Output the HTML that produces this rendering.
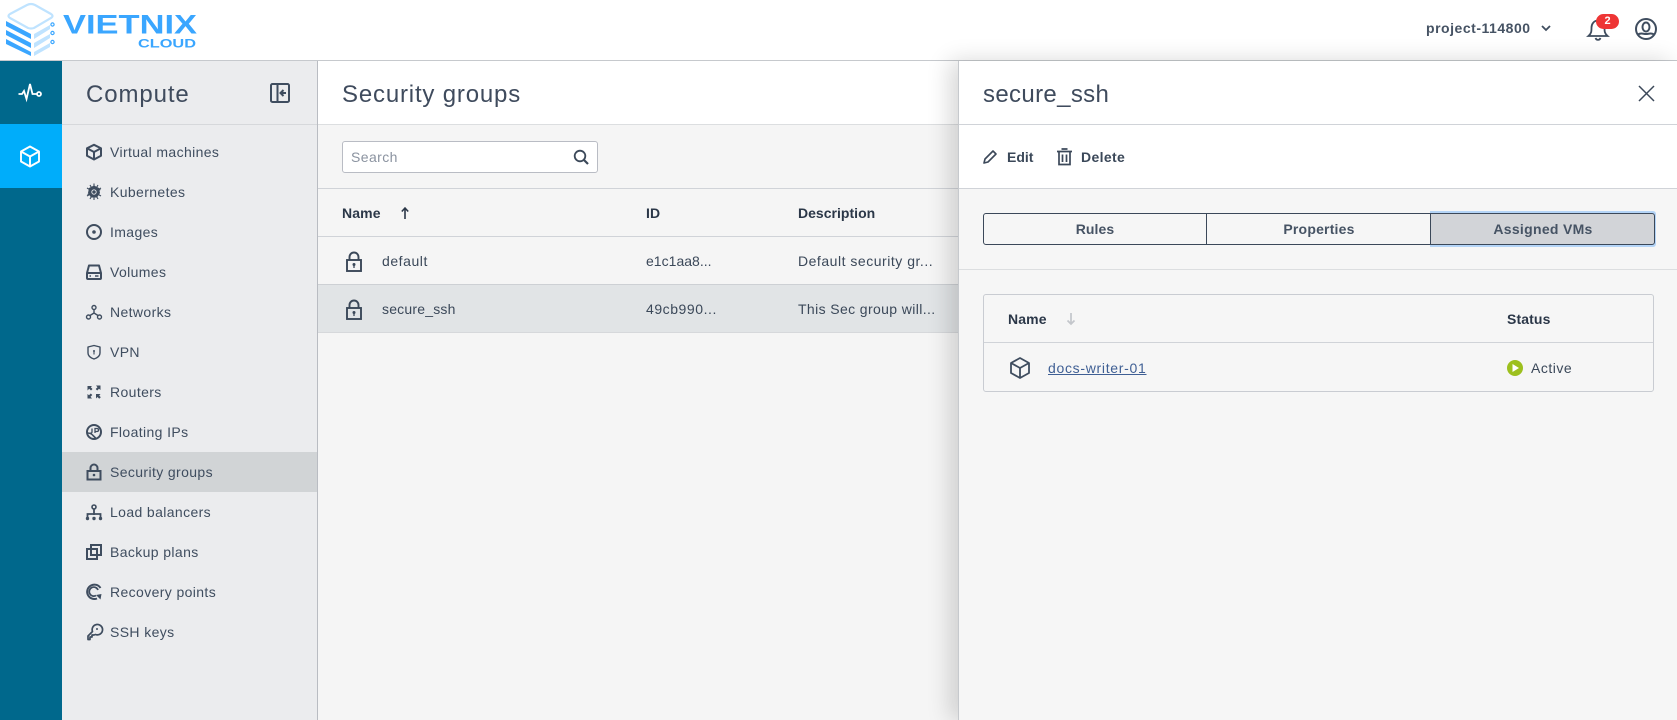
<!DOCTYPE html>
<html><head><meta charset="utf-8"><title>Security groups</title>
<style>
*{box-sizing:border-box}
html,body{margin:0;padding:0;width:1677px;height:720px;overflow:hidden;background:#f5f5f5;font-family:"Liberation Sans",sans-serif;color:#3b4859}
.a{position:absolute}
.t{position:absolute;white-space:nowrap;line-height:20px;font-size:14px}
.nav{position:absolute;left:62px;width:255px;height:40px}
.nav svg{position:absolute;left:22px;top:10px;width:20px;height:20px;fill:none;stroke:#3f4d5f;stroke-width:2}
.nav span{position:absolute;left:48px;top:10px;font-size:14px;line-height:20px;letter-spacing:.38px;color:#3f4d5f;white-space:nowrap}
.b{font-weight:bold;color:#2b3748;letter-spacing:.12px}
.l{background:#d0d3d8;height:1px;position:absolute}
</style></head><body>

<!-- header -->
<div class="a" style="left:0;top:0;width:1677px;height:61px;background:#fff;border-bottom:1px solid #c6c9cd"></div>
<svg class="a" style="left:4px;top:1px" width="200" height="56" viewBox="0 0 200 56">
<path d="M27 3 Q29 3 31 4 L47 13 Q50 15 47 17 L30 27 Q27 28 24 27 L6 17 Q3 15 6 13 L23 4 Q25 3 27 3Z" fill="#fff" stroke="#bfe3ff" stroke-width="2.200"/>
<path d="M2 20 27 33V38L2 25Z M2 29 27 42V47L2 34Z M2 38 27 51V55L2 43Z" fill="#3aa6ff"/>
<path d="M30 33 46 24V28L30 38Z M30 42 46 33V37L30 47Z M30 51 46 42V46L30 55Z" fill="#bfe3ff"/>
<circle cx="48.500" cy="23.500" r="1.600" fill="#fff" stroke="#3aa6ff" stroke-width="1.200"/><circle cx="48.500" cy="32" r="1.600" fill="#fff" stroke="#3aa6ff" stroke-width="1.200"/><circle cx="48.500" cy="41" r="1.600" fill="#fff" stroke="#3aa6ff" stroke-width="1.200"/>
<text x="59" y="32.500" font-family="Liberation Sans" font-weight="bold" font-size="27" fill="#3aa6ff" textLength="134" lengthAdjust="spacingAndGlyphs">VIETNIX</text>
<text x="134" y="46.500" font-family="Liberation Sans" font-weight="bold" font-size="11.500" fill="#3aa6ff" textLength="58" lengthAdjust="spacingAndGlyphs">CLOUD</text>
</svg>
<div class="t" style="left:1426px;top:18px;font-weight:bold;color:#465364;letter-spacing:.52px">project-114800</div>
<svg class="a" style="left:1540px;top:24px" width="12" height="8" viewBox="0 0 12 8" fill="none" stroke="#3f4d5f" stroke-width="1.800"><path d="M2 2 6 6 10 2"/></svg>
<svg class="a" style="left:1586px;top:17px" width="24" height="25" viewBox="0 0 24 25" fill="none" stroke="#3f4d5f" stroke-width="1.800"><path d="M2.500 19C5.500 16.500 5.500 14 5.500 10.500 5.500 7 8 3.500 12 3.500S18.500 7 18.500 10.500C18.500 14 18.500 16.500 21.500 19Z"/><path d="M9.500 21C10.500 23.500 13.500 23.500 14.500 21"/></svg>
<div class="a" style="left:1596px;top:14px;width:23px;height:15px;border-radius:8px;background:#ee3535;color:#fff;font-size:11px;font-weight:bold;line-height:15px;text-align:center">2</div>
<svg class="a" style="left:1634px;top:17px" width="24" height="24" viewBox="0 0 24 24" fill="none" stroke="#3f4d5f" stroke-width="2"><circle cx="12" cy="12" r="10"/><ellipse cx="12" cy="10" rx="3.500" ry="4.500"/><path d="M4 17.500C7 15.500 9 17 12 17S17 15.500 20 17.500"/></svg>

<!-- rail -->
<div class="a" style="left:0;top:61px;width:62px;height:659px;background:#00688c"></div>
<div class="a" style="left:0;top:124px;width:62px;height:64px;background:#00adfa"></div>
<svg class="a" style="left:17px;top:81px" width="26" height="22" viewBox="0 0 26 22" fill="none" stroke="#fff" stroke-width="1.800"><path d="M1.500 13H5L7 10 9.500 18 13 3 15.500 13H20"/><circle cx="22" cy="13" r="2"/></svg>
<svg class="a" style="left:19px;top:145px" width="22" height="23" viewBox="0 0 22 23" fill="none" stroke="#fff" stroke-width="1.900" stroke-linejoin="round"><path d="M11 1.500 20 6.500V16.500L11 21.500 2 16.500V6.500Z"/><path d="M2 6.500 11 11.500 20 6.500M11 11.500V21.500"/></svg>

<!-- sidebar -->
<div class="a" style="left:62px;top:61px;width:256px;height:659px;background:#ebecee;border-right:1px solid #b9bcc2"></div>
<div class="l" style="left:62px;top:124px;width:255px;background:#d6d8db"></div>
<div class="t" style="left:86px;top:80px;font-size:24px;line-height:30px;color:#3f4b5d;letter-spacing:.9px">Compute</div>
<svg class="a" style="left:269px;top:82px" width="22" height="22" viewBox="0 0 22 22" fill="none" stroke="#3f4d5f" stroke-width="2"><rect x="2" y="2" width="18" height="18" rx="1.500"/><path d="M8.500 2V20"/><path d="M17 11H12M14.500 8 11.500 11 14.500 14"/></svg>

<div class="a" style="left:62px;top:452px;width:255px;height:40px;background:#d1d4d6"></div>

<div class="nav" style="top:132px"><svg viewBox="0 0 20 20"><path d="M10 2.800 17 6.300V13.700L10 17.500 3 13.700V6.300Z" stroke-linejoin="round"/><path d="M3 6.300 10 10 17 6.300M10 10V17.500"/></svg><span>Virtual machines</span></div>
<div class="nav" style="top:172px"><svg viewBox="0 0 20 20"><path d="M10 3.500 15 6 16 11 13 15.500H7L4 11 5 6Z" fill="#3f4d5f" stroke="none"/><circle cx="10" cy="10" r="1.600" fill="#ebecee" stroke="none"/><path d="M10 1.500V18M3 6 17 14M17 6 3 14M3.500 12.500 16.500 7.500M6 17 14 3M14 17 6 3" stroke-width="1.100"/><circle cx="10" cy="10" r="2.200" fill="#3f4d5f" stroke="#ebecee" stroke-width=".9"/></svg><span>Kubernetes</span></div>
<div class="nav" style="top:212px"><svg viewBox="0 0 20 20"><circle cx="10" cy="10" r="7"/><circle cx="10" cy="10" r="1.800" fill="#3f4d5f" stroke="none"/></svg><span>Images</span></div>
<div class="nav" style="top:252px"><svg viewBox="0 0 20 20"><path d="M3 11 5 3.500H15L17 11V16Q17 17 16 17H4Q3 17 3 16Z" stroke-linejoin="round"/><path d="M3 11H17"/><path d="M5.500 14H7M11 14H14.500" stroke-width="1.600"/></svg><span>Volumes</span></div>
<div class="nav" style="top:292px"><svg viewBox="0 0 20 20" style="stroke-width:1.400"><circle cx="10" cy="5.500" r="2"/><circle cx="4.500" cy="15" r="2"/><circle cx="15.500" cy="15" r="2"/><path d="M10 7.500V11M10 11 6 13.500M10 11 14 13.500"/></svg><span>Networks</span></div>
<div class="nav" style="top:332px"><svg viewBox="0 0 20 20" style="stroke-width:1.400"><path d="M10 3.500 16 5V11C16 14 13 16 10 17 7 16 4 14 4 11V5Z" stroke-linejoin="round"/><circle cx="10" cy="9" r="1" fill="#3f4d5f" stroke="none"/><path d="M10 9V12.500" stroke-width="1.100"/></svg><span>VPN</span></div>
<div class="nav" style="top:372px"><svg viewBox="0 0 20 20" style="stroke:none;fill:#3f4d5f"><path d="M3.500 4H8L6.800 5.200 8.500 7 7 8.500 5.200 6.800 3.500 8.500Z M16.500 3.500V8L15 6.800 13.200 8.500 11.700 7 13.500 5.200 12 3.500Z M3.500 16.500V12L5 13.200 6.800 11.500 8.300 13 6.500 14.800 8 16.500Z M12 12H16.500L15.200 13.500 16.800 15.200 15.200 16.700 13.500 15 12 16.500Z"/></svg><span>Routers</span></div>
<div class="nav" style="top:412px"><svg viewBox="0 0 20 20"><circle cx="10" cy="10" r="7"/><path d="M3.500 11C6 11 8 12 9.500 14L12 16.500" stroke-width="1.600"/><path d="M8 6.500V10C8 11 7 11.300 6 11M11 11V6.500H13Q14.500 6.500 14.500 8T13 9.500H11" stroke-width="1.300"/></svg><span>Floating IPs</span></div>
<div class="nav" style="top:452px"><svg viewBox="0 0 20 20"><rect x="3.500" y="9" width="13" height="8.500"/><path d="M6.500 9V6A3.500 3.500 0 0 1 13.500 6V9"/><circle cx="10" cy="13" r="1.300" fill="#3f4d5f" stroke="none"/></svg><span>Security groups</span></div>
<div class="nav" style="top:492px"><svg viewBox="0 0 20 20"><circle cx="10" cy="5" r="2" stroke-width="1.600"/><path d="M10 7V13M3.500 16V12H16.500V16" stroke-width="1.800"/><circle cx="3.500" cy="16.500" r="1.700" fill="#3f4d5f" stroke="none"/><circle cx="10" cy="16.500" r="1.700" fill="#3f4d5f" stroke="none"/><circle cx="16.500" cy="16.500" r="1.700" fill="#3f4d5f" stroke="none"/></svg><span>Load balancers</span></div>
<div class="nav" style="top:532px"><svg viewBox="0 0 20 20"><rect x="3" y="7" width="10" height="10"/><rect x="7" y="3" width="10" height="10"/></svg><span>Backup plans</span></div>
<div class="nav" style="top:572px"><svg viewBox="0 0 20 20"><path d="M16.500 6A7.200 7.200 0 1 0 13 16.500"/><path d="M14 8A4.500 4.500 0 1 0 12 13.500" stroke-width="1.700"/><path d="M12 13 17.500 12 16.500 17.500Z" fill="#3f4d5f" stroke="none"/></svg><span>Recovery points</span></div>
<div class="nav" style="top:612px"><svg viewBox="0 0 20 20"><path d="M4 17.500V14L8.500 9.500A5.200 5.200 0 1 1 11.500 12.500L10 13H8V15H6V17.500Z" stroke-linejoin="round" stroke-width="1.700"/><circle cx="13" cy="7" r="1" fill="#3f4d5f" stroke="none"/></svg><span>SSH keys</span></div>

<!-- main -->
<div class="a" style="left:318px;top:61px;width:642px;height:63px;background:#fff"></div>
<div class="l" style="left:318px;top:124px;width:642px;background:#dcdee0"></div>
<div class="t" style="left:342px;top:80px;font-size:24px;line-height:30px;letter-spacing:.82px;color:#3f4b5d">Security groups</div>
<div class="a" style="left:342px;top:141px;width:256px;height:32px;background:#fff;border:1px solid #b9bcc4;border-radius:3px"></div>
<div class="t" style="left:351px;top:147px;color:#8b93a0;letter-spacing:.42px">Search</div>
<svg class="a" style="left:572px;top:148px" width="18" height="18" viewBox="0 0 18 18" fill="none" stroke="#3b4859" stroke-width="1.800"><circle cx="8" cy="8" r="5.300"/><path d="M12 12 16 16" stroke-width="2.200"/></svg>
<div class="l" style="left:318px;top:188px;width:642px"></div>
<div class="t b" style="left:342px;top:203px">Name</div>
<svg class="a" style="left:399px;top:206px" width="12" height="14" viewBox="0 0 12 14" fill="none" stroke="#2b3748" stroke-width="1.600"><path d="M6 13V2M2.800 5.500 6 2 9.200 5.500"/></svg>
<div class="t b" style="left:646px;top:203px">ID</div>
<div class="t b" style="left:798px;top:203px;letter-spacing:.02px">Description</div>
<div class="l" style="left:318px;top:236px;width:642px"></div>
<div class="a" style="left:318px;top:284px;width:642px;height:49px;background:#e1e4e6;border-top:1px solid #cdd0d4;border-bottom:1px solid #d6d8db"></div>

<svg class="a" style="left:345px;top:251px" width="18" height="21" viewBox="0 0 18 21" fill="none" stroke="#3b4859" stroke-width="1.900"><rect x="2" y="9" width="14" height="11"/><path d="M4.500 9V6A4.500 4.500 0 0 1 13.500 6V9"/><circle cx="9" cy="13.500" r="1.500" fill="#3b4859" stroke="none"/><path d="M9 14V17" stroke-width="1.300"/></svg>
<div class="t" style="left:382px;top:251px;letter-spacing:.55px">default</div>
<div class="t" style="left:646px;top:251px;letter-spacing:.02px">e1c1aa8...</div>
<div class="t" style="left:798px;top:251px;letter-spacing:.52px">Default security gr...</div>
<svg class="a" style="left:345px;top:299px" width="18" height="21" viewBox="0 0 18 21" fill="none" stroke="#3b4859" stroke-width="1.900"><rect x="2" y="9" width="14" height="11"/><path d="M4.500 9V6A4.500 4.500 0 0 1 13.500 6V9"/><circle cx="9" cy="13.500" r="1.500" fill="#3b4859" stroke="none"/><path d="M9 14V17" stroke-width="1.300"/></svg>
<div class="t" style="left:382px;top:299px;letter-spacing:.2px">secure_ssh</div>
<div class="t" style="left:646px;top:299px;letter-spacing:.55px">49cb990...</div>
<div class="t" style="left:798px;top:299px;letter-spacing:.38px">This Sec group will...</div>

<!-- panel -->
<div class="a" style="left:958px;top:61px;width:719px;height:659px;background:#f6f6f6;border-left:1px solid #c6c9cd;box-shadow:-8px 0 22px rgba(0,0,0,.16)"></div>
<div class="a" style="left:959px;top:61px;width:718px;height:127px;background:#fff"></div>
<div class="l" style="left:959px;top:124px;width:718px"></div>
<div class="l" style="left:959px;top:188px;width:718px"></div>
<div class="l" style="left:959px;top:269px;width:718px;background:#dcdee0"></div>
<div class="t" style="left:983px;top:80px;font-size:24px;line-height:30px;letter-spacing:.35px;color:#3f4b5d">secure_ssh</div>
<svg class="a" style="left:1637px;top:84px" width="19" height="19" viewBox="0 0 19 19" fill="none" stroke="#3b4859" stroke-width="1.500"><path d="M2 2 17 17M17 2 2 17"/></svg>
<svg class="a" style="left:982px;top:149px" width="16" height="16" viewBox="0 0 16 16" fill="none" stroke="#3b4859" stroke-width="1.600"><path d="M2 14 3 10 11 2 14 5 6 13Z" stroke-linejoin="round"/></svg>
<div class="t b" style="left:1007px;top:147px;color:#3b4859;letter-spacing:0">Edit</div>
<svg class="a" style="left:1056px;top:148px" width="17" height="18" viewBox="0 0 17 18" fill="none" stroke="#3b4859" stroke-width="1.700"><path d="M1 3.500H16M5.500 1H11.500M3 3.500V16.500H14V3.500M6.500 6.500V14M10.500 6.500V14"/></svg>
<div class="t b" style="left:1081px;top:147px;color:#3b4859;letter-spacing:.35px">Delete</div>

<div class="a" style="left:983px;top:213px;width:672px;height:32px;border:1px solid #3b4859;border-radius:3px;background:#f6f6f6"></div>
<div class="a" style="left:1430px;top:211px;width:226px;height:36px;background:#b4d4f7;border-radius:0 3px 3px 0"></div>
<div class="a" style="left:1430px;top:213px;width:225px;height:32px;background:#d2d4d8;border:1px solid #3b4859;border-radius:0 3px 3px 0"></div>
<div class="a" style="left:1206px;top:213px;width:1px;height:32px;background:#3b4859"></div>
<div class="t" style="left:984px;top:219px;width:222px;text-align:center;font-weight:bold;color:#465364;letter-spacing:.1px">Rules</div>
<div class="t" style="left:1207px;top:219px;width:224px;text-align:center;font-weight:bold;color:#465364;letter-spacing:.2px">Properties</div>
<div class="t" style="left:1431px;top:219px;width:224px;text-align:center;font-weight:bold;color:#465364;letter-spacing:.3px">Assigned VMs</div>

<div class="a" style="left:983px;top:294px;width:671px;height:98px;border:1px solid #c9ccd2;border-radius:3px"></div>
<div class="l" style="left:984px;top:342px;width:669px"></div>
<div class="t b" style="left:1008px;top:309px">Name</div>
<svg class="a" style="left:1065px;top:312px" width="12" height="14" viewBox="0 0 12 14" fill="none" stroke="#c3c6cb" stroke-width="1.700"><path d="M6 1V12M2.500 8.500 6 12 9.500 8.500"/></svg>
<div class="t b" style="left:1507px;top:309px">Status</div>
<svg class="a" style="left:1008px;top:356px" width="24" height="24" viewBox="0 0 24 24" fill="none" stroke="#3f4d5f" stroke-width="1.800" stroke-linejoin="round"><path d="M12 2 21 7V17L12 22 3 17V7Z"/><path d="M3 7 12 12 21 7M12 12V22"/></svg>
<div class="t" style="left:1048px;top:358px;letter-spacing:.7px;color:#3f5f94;text-decoration:underline">docs-writer-01</div>
<svg class="a" style="left:1507px;top:360px" width="16" height="16" viewBox="0 0 16 16"><circle cx="8" cy="8" r="8" fill="#9dc01e"/><path d="M5.500 4 12 8 5.500 12Z" fill="#fff"/></svg>
<div class="t" style="left:1531px;top:358px;letter-spacing:.5px">Active</div>
</body></html>
